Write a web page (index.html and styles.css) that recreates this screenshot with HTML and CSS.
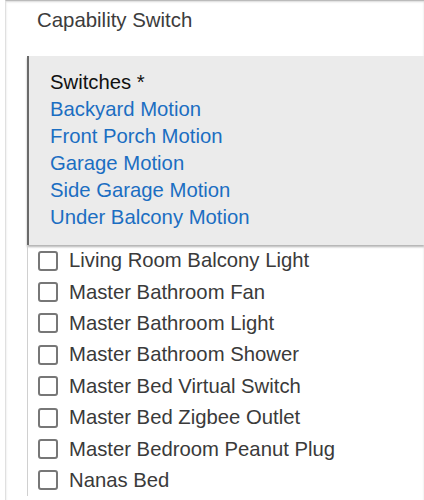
FILE: index.html
```html
<!DOCTYPE html>
<html lang="en">
<head>
    <meta charset="UTF-8">
    <meta name="viewport" content="width=device-width, initial-scale=1.0">
    <title>Capability Switch</title>
    <link rel="stylesheet" href="styles.css">
</head>
<body>
    <div class="panel">
        <div class="field-title">Capability Switch</div>

        <!-- Selected devices summary -->
        <div class="selected-box">
            <div class="selected-title">Switches *</div>
            <div class="selected-item">Backyard Motion</div>
            <div class="selected-item">Front Porch Motion</div>
            <div class="selected-item">Garage Motion</div>
            <div class="selected-item">Side Garage Motion</div>
            <div class="selected-item">Under Balcony Motion</div>
        </div>

        <div class="device-list">
            <label class="device-row"><span class="check"></span>Living Room Balcony Light</label>
            <label class="device-row"><span class="check"></span>Master Bathroom Fan</label>
            <label class="device-row"><span class="check"></span>Master Bathroom Light</label>
            <label class="device-row"><span class="check"></span>Master Bathroom Shower</label>
            <label class="device-row"><span class="check"></span>Master Bed Virtual Switch</label>
            <label class="device-row"><span class="check"></span>Master Bed Zigbee Outlet</label>
            <label class="device-row"><span class="check"></span>Master Bedroom Peanut Plug</label>
            <label class="device-row"><span class="check"></span>Nanas Bed</label>
        </div>
    </div>
</body>
</html>
```

FILE: styles.css
```css
body {
    margin: 0;
    font-family: "Liberation Sans", Arial, sans-serif;
    background: #fff;
    overflow: hidden;
}
.panel {
    margin-left: 5px;
    border-left: 1px solid #e0e0e0;
    border-top: 1px solid #bbb;
    box-shadow: inset 0 1px 2px rgba(0, 0, 0, 0.15);
    min-height: 500px;
}
.field-title {
    padding: 8px 0 0 31px;
    height: 47px;
    font-size: 20.4px;
    color: #3c3c3c;
}
.selected-box {
    margin-left: 21px;
    background: #ebebeb;
    border-left: 2px solid #6a6a6a;
    box-shadow: 0 2px 2px rgba(0, 0, 0, 0.3);
    padding: 13px 0 14px 21px;
    font-size: 20.3px;
    line-height: 27px;
}
.selected-title {
    color: #111;
}
.selected-item {
    color: #1b6ec2;
}
.device-list {
    margin-left: 21px;
    border-left: 1px solid #d0d0d0;
}
.device-row {
    display: flex;
    align-items: center;
    height: 31.4px;
    padding-left: 10px;
    font-size: 20.3px;
    color: #3a3a3a;
}
.check {
    width: 16px;
    height: 16px;
    border: 2px solid #777;
    border-radius: 3px;
    margin-right: 11px;
    flex-shrink: 0;
}
```
